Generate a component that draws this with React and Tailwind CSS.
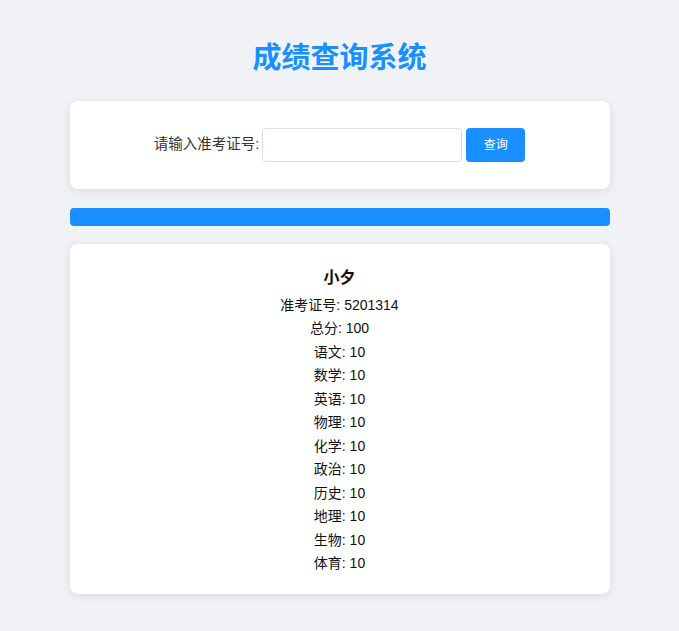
import React from 'react';

const scores = [
  ['准考证号', '5201314'],
  ['总分', '100'],
  ['语文', '10'],
  ['数学', '10'],
  ['英语', '10'],
  ['物理', '10'],
  ['化学', '10'],
  ['政治', '10'],
  ['历史', '10'],
  ['地理', '10'],
  ['生物', '10'],
  ['体育', '10'],
];

const App = () => {
  return (
    <div
      className="min-h-[631px] bg-[#f0f2f5] pt-[37px] pb-8"
      style={{ fontFamily: '"Liberation Sans", Arial, "Noto Sans CJK SC", sans-serif' }}
    >
      <h1 className="text-center text-[29px] leading-[42px] font-bold text-[#1890ff] mb-[22px]">
        成绩查询系统
      </h1>

      <div className="w-[540px] mx-auto flex flex-col">
        <div className="bg-white rounded-lg shadow-[0_2px_8px_rgba(0,0,0,0.1)] py-[27px] flex items-center justify-center">
          <label className="text-[14.5px] text-[#333] mr-[3px]">请输入准考证号:</label>
          <input
            type="text"
            className="w-[200px] h-[34px] border border-[#dcdcdc] rounded px-2 text-sm outline-none bg-white"
          />
          <button className="ml-[4px] w-[59px] h-[34px] bg-[#1890ff] text-white text-xs rounded">
            查询
          </button>
        </div>

        <div className="mt-[19px] h-[18px] bg-[#1890ff] rounded" />

        <div className="mt-[18px] bg-white rounded-lg shadow-[0_2px_8px_rgba(0,0,0,0.1)] pt-[22px] pb-[19px] text-center text-[#111]">
          <h3 className="text-base font-bold leading-6 mb-[4px]">小夕</h3>
          {scores.map(([k, v]) => (
            <p key={k} className="text-sm leading-[23.45px]">
              {k}: {v}
            </p>
          ))}
        </div>
      </div>
    </div>
  );
};

export default App;
